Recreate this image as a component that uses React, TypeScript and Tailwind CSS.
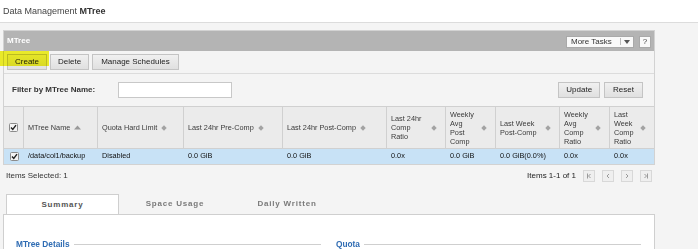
import React from "react";

const cols: { w: number; label?: string; sort?: "asc" | "none" }[] = [
  { w: 20 },
  { w: 74, label: "MTree Name", sort: "asc" },
  { w: 86, label: "Quota Hard Limit", sort: "none" },
  { w: 99, label: "Last 24hr Pre-Comp", sort: "none" },
  { w: 104, label: "Last 24hr Post-Comp", sort: "none" },
  { w: 59, label: "Last 24hr Comp Ratio", sort: "none" },
  { w: 50, label: "Weekly Avg Post Comp", sort: "none" },
  { w: 64, label: "Last Week Post-Comp", sort: "none" },
  { w: 50, label: "Weekly Avg Comp Ratio", sort: "none" },
  { w: 44, label: "Last Week Comp Ratio", sort: "none" },
];

const row = [
  "",
  "/data/col1/backup",
  "Disabled",
  "0.0 GiB",
  "0.0 GiB",
  "0.0x",
  "0.0 GiB",
  "0.0 GiB(0.0%)",
  "0.0x",
  "0.0x",
];

function CheckBox() {
  return (
    <svg width="9" height="9" viewBox="0 0 9 9" className="block shrink-0">
      <rect x="0.5" y="0.5" width="8" height="8" rx="1" fill="#f4f4f4" stroke="#8c8c8c" />
      <path d="M2 4.5 L3.8 6.5 L7 2.2" fill="none" stroke="#222" strokeWidth="1.4" />
    </svg>
  );
}

function SortIcon({ dir }: { dir: "asc" | "none" }) {
  if (dir === "asc") {
    return (
      <svg width="7" height="5" viewBox="0 0 7 5" className="block shrink-0">
        <path d="M0 4.5 L3.5 0.5 L7 4.5 Z" fill="#9a9a9a" />
      </svg>
    );
  }
  return (
    <svg width="6" height="6" viewBox="0 0 6 6" className="block shrink-0">
      <path d="M3 0.3 L5.7 3 L3 5.7 L0.3 3 Z" fill="#a3a3a3" />
    </svg>
  );
}

function Btn({ children, className = "" }: { children: React.ReactNode; className?: string }) {
  return (
    <div
      className={`h-[16px] flex items-center px-[7px] border border-[#c4c4c4] bg-gradient-to-b from-[#f0f0f0] to-[#e0e0e0] text-[8px] text-[#222] leading-none ${className}`}
    >
      {children}
    </div>
  );
}

function PageBtn({ d }: { d: string }) {
  return (
    <div className="w-[12px] h-[12px] flex items-center justify-center border border-[#d8d8d8] bg-[#efefef]">
      <svg width="6" height="6" viewBox="0 0 6 6" className="block">
        <path d={d} fill="none" stroke="#9a9a9a" strokeWidth="1" />
      </svg>
    </div>
  );
}

export default function App() {
  return (
    <div className="w-[698px] h-[249px] overflow-hidden bg-[#f4f4f4] font-['Liberation_Sans',Arial,sans-serif]">
      {/* Page title */}
      <div className="h-[23px] bg-white border-b border-[#dcdcdc] pl-[3px] pt-[2px] flex items-center text-[9px] text-[#444]">
        <span>
          Data Management <b className="text-[#333]">MTree</b>
        </span>
      </div>

      {/* MTree panel */}
      <div className="ml-[3px] mt-[7px] w-[652px] border border-[#d2d2d2] bg-[#f4f4f4]">
        <div className="h-[20px] bg-[#b4b4b4] flex items-center justify-between pl-[3px] pr-[3px]">
          <span className="text-[8px] font-bold text-white">MTree</span>
          <div className="flex items-center gap-[5px] pt-px">
            <div className="h-[12px] w-[68px] flex items-center border border-[#a9a9a9] bg-[#f9f9f9] pl-[4px] text-[8px] text-[#333] leading-none">
              <span>More Tasks</span>
              <span className="ml-auto w-px h-[7px] bg-[#bbb]" />
              <svg width="6" height="4" viewBox="0 0 6 4" className="block mx-[3px]">
                <path d="M0 0 L6 0 L3 4 Z" fill="#555" />
              </svg>
            </div>
            <div className="h-[12px] w-[12px] flex items-center justify-center border border-[#a9a9a9] bg-[#f9f9f9] text-[8px] text-[#444] leading-none">
              ?
            </div>
          </div>
        </div>

        {/* Toolbar */}
        <div className="relative h-[23px] border-b border-[#dcdcdc] flex items-center gap-[3px] pl-[3px]">
          <span className="absolute left-[-4px] top-[0px] w-[49px] h-[15px] bg-[#f4f42a] mix-blend-multiply" />
          <Btn>Create</Btn>
          <Btn>Delete</Btn>
          <Btn className="px-[8px]">Manage Schedules</Btn>
        </div>

        {/* Filter */}
        <div className="h-[32px] flex items-center pl-[8px] pr-[11px]">
          <span className="w-[106px] text-[8px] font-bold text-[#333]">Filter by MTree Name:</span>
          <div className="w-[114px] h-[16px] bg-white border border-[#c8c8c8]" />
          <div className="ml-auto flex items-center gap-[4px]">
            <Btn>Update</Btn>
            <Btn className="px-[8px]">Reset</Btn>
          </div>
        </div>

        {/* Table header */}
        <div className="h-[43px] flex border-t border-b border-[#d0d0d0] bg-[#ebebeb]">
          {cols.map((c, i) => (
            <div
              key={i}
              style={{ width: c.w }}
              className={`shrink-0 h-full flex items-center ${i < cols.length - 1 ? "border-r border-[#d0d0d0]" : ""} ${
                i === 0 ? "justify-center" : "pl-[4px] pr-[8px] gap-[4px]"
              }`}
            >
              {i === 0 ? (
                <CheckBox />
              ) : (
                <>
                  <span className="text-[7.3px] leading-[9px] text-[#3a3a3a]">{c.label}</span>
                  <SortIcon dir={c.sort ?? "none"} />
                </>
              )}
            </div>
          ))}
        </div>

        {/* Data row */}
        <div className="h-[15px] flex bg-[#c8e2f6]">
          {cols.map((c, i) => (
            <div
              key={i}
              style={{ width: c.w }}
              className={`shrink-0 h-full flex items-center ${i === 0 ? "justify-center" : "pl-[4px]"}`}
            >
              {i === 0 ? (
                <CheckBox />
              ) : (
                <span className="text-[7.3px] text-[#111] whitespace-nowrap">{row[i]}</span>
              )}
            </div>
          ))}
        </div>
      </div>

      {/* Items row */}
      <div className="ml-[3px] w-[652px] h-[21px] flex items-center pl-[3px] pr-[3px]">
        <span className="text-[8px] text-[#333]">Items Selected: 1</span>
        <span className="ml-auto text-[8px] text-[#222] mr-[7px]">Items 1-1 of 1</span>
        <div className="flex items-center gap-[7px]">
          <PageBtn d="M1.5 0.5 V5.5 M4.5 1 L2.5 3 L4.5 5" />
          <PageBtn d="M4 1 L2 3 L4 5" />
          <PageBtn d="M2 1 L4 3 L2 5" />
          <PageBtn d="M4.5 0.5 V5.5 M1.5 1 L3.5 3 L1.5 5" />
        </div>
      </div>

      {/* Tabs */}
      <div className="ml-[3px] mt-[8px] w-[652px]">
        <div className="flex pl-[3px] h-[20px]">
          <div className="w-[113px] h-[20px] -mb-px relative z-10 bg-white border border-b-0 border-[#cfcfcf] flex items-center justify-center text-[8px] font-bold tracking-[0.8px] text-[#555]">
            Summary
          </div>
          <div className="w-[112px] flex items-center justify-center text-[8px] font-bold tracking-[0.8px] text-[#7a7a7a]">
            Space Usage
          </div>
          <div className="w-[112px] flex items-center justify-center text-[8px] font-bold tracking-[0.8px] text-[#7a7a7a]">
            Daily Written
          </div>
        </div>
        <div className="h-[40px] bg-white border border-[#cfcfcf] flex pt-[24px] pl-[12px] pr-[13px]">
          <div className="w-[305px] flex items-center h-[10px]">
            <span className="text-[8.3px] font-bold text-[#2f6cb3]">MTree Details</span>
            <span className="flex-1 h-px bg-[#cfcfcf] ml-[4px]" />
          </div>
          <div className="flex-1 ml-[15px] flex items-center h-[10px]">
            <span className="text-[8.3px] font-bold text-[#2f6cb3]">Quota</span>
            <span className="flex-1 h-px bg-[#cfcfcf] ml-[4px]" />
          </div>
        </div>
      </div>
    </div>
  );
}
